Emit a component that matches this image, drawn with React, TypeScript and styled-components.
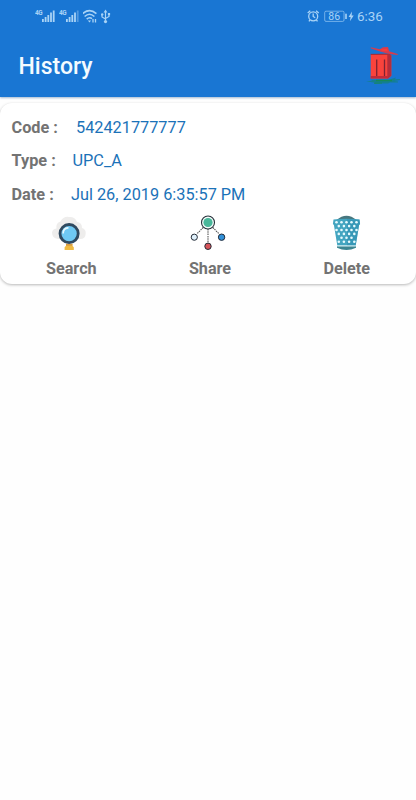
import React from "react";
import styled, { createGlobalStyle } from "styled-components";

const GlobalStyle = createGlobalStyle`
  * { box-sizing: border-box; }
  body { margin: 0; background: #fefefe; font-family: Roboto, "Liberation Sans", sans-serif; }
`;

const Screen = styled.main`
  width: 100%;
  min-height: 800px;
  background: #fefefe;
  overflow: hidden;
`;

const Header = styled.header`
  height: 97px;
  background: #1976d3;
  box-shadow: 0 1px 2px rgba(20, 80, 140, 0.4);
`;

const StatusBar = styled.div`
  height: 32px;
  padding: 0 34px 0 35px;
  display: flex;
  align-items: center;
  justify-content: space-between;
  color: #a9d3f6;
`;

const StatusGroup = styled.div`
  display: flex;
  align-items: center;
  height: 20px;
`;

const Clock = styled.span`
  font-size: 13.4px;
  line-height: 20px;
  margin-left: 3px;
  padding-top: 1px;
  width: 25px;
  white-space: nowrap;
`;

const Toolbar = styled.div`
  height: 65px;
  padding: 0 14px 0 18.5px;
  display: flex;
  align-items: center;
  justify-content: space-between;
`;

const Title = styled.h1`
  margin: 0;
  padding-top: 5px;
  color: #f4fbff;
  font-size: 23px;
  font-weight: 500;
  line-height: 30px;
`;

const IconButton = styled.button`
  display: block;
  padding: 0;
  border: 0;
  background: none;
  height: 40px;
`;

const Card = styled.section`
  margin-top: 6px;
  height: 181px;
  padding-top: 7.5px;
  background: #fff;
  border-radius: 12px;
  box-shadow: 0 1px 3px rgba(0, 0, 0, 0.28);
`;

const Field = styled.div`
  height: 33.5px;
  padding-left: 11.5px;
  display: flex;
  align-items: center;
  font-size: 16.3px;
  white-space: nowrap;
`;

const Label = styled.span<{ $width: number }>`
  width: ${(p) => p.$width}px;
  color: #737373;
  font-weight: 700;
`;

const Value = styled.span`
  color: #1b72b8;
`;

const Actions = styled.div`
  margin-top: 4px;
  display: grid;
  grid-template-columns: repeat(3, 1fr);
`;

const Action = styled.div`
  display: flex;
  flex-direction: column;
  align-items: center;
`;

const ActionLabel = styled.span<{ $shift: number }>`
  margin-top: 8px;
  padding-left: ${(p) => p.$shift}px;
  color: #737373;
  font-size: 16.2px;
  font-weight: 700;
  line-height: 20px;
`;

const Signal = ({ faded }: { faded?: boolean }) => (
  <svg width="24" height="20" viewBox="0 0 24 20" fill="currentColor">
    <text x="0" y="9" fontSize="6.4" fontWeight="700" textLength="7.5">4G</text>
    <rect x="7" y="13" width="1.8" height="3" />
    <rect x="9.7" y="11" width="1.8" height="5" />
    <rect x="12.4" y="9" width="1.8" height="7" />
    <rect x="15.1" y="6.5" width="1.8" height="9.5" />
    <rect x="17.8" y="4.5" width="1.8" height="11.5" opacity={faded ? 0.4 : 1} />
  </svg>
);

const WifiIcon = () => (
  <svg width="18" height="20" viewBox="0 0 18 20" fill="none" stroke="currentColor" strokeWidth="1.6">
    <path d="M-.4 7.7Q6.5 1.7 13.4 7.7M1.6 10.5Q6.5 6 11.4 10.5M3.7 13.1Q6.5 10.6 9 12.7" />
    <path d="M4.8 14.6h3.3l-1.6 1.9z" fill="currentColor" stroke="none" />
    <path d="M10 13v3.6M12.5 13v3.6" strokeWidth="1.3" />
  </svg>
);

const UsbIcon = () => (
  <svg width="10" height="20" viewBox="0 0 10 20" fill="none" stroke="currentColor" strokeWidth="1.2">
    <path d="M4.5 5.5v9M1 8.5v2.5l3.5 2M8 8v2.5L4.5 12.5" />
    <path d="M4.5 3.4 6.4 6.4H2.6z" fill="currentColor" stroke="none" />
    <g fill="currentColor" stroke="none">
      <circle cx="4.5" cy="15.6" r="1.6" />
      <circle cx="1.2" cy="8.4" r="1.2" />
      <rect x="6.9" y="7" width="2.2" height="2.2" />
    </g>
  </svg>
);

const AlarmIcon = () => (
  <svg width="15" height="20" viewBox="0 0 15 20" fill="none" stroke="currentColor" strokeWidth="1.3">
    <circle cx="6.2" cy="10.3" r="4.5" />
    <path d="M6.2 7.5v3l2 1.3M.7 7 3.3 4.7M11.7 7 9.1 4.7M3 14l-1.1 1.4M9.4 14l1.1 1.4" />
  </svg>
);

const BatteryIcon = () => (
  <svg width="32" height="20" viewBox="0 0 32 20" fill="currentColor">
    <rect x="2.7" y="5.2" width="19.3" height="10.2" rx="1.3" fill="none" stroke="currentColor" strokeWidth="0.8" opacity=".8" />
    <text x="6.3" y="14.2" fontSize="10.5">86</text>
    <rect x="23.2" y="7.7" width="1.6" height="5.3" />
    <path d="M30 5.4 26.6 10.9h2L27.9 15.3l3.8-5.9h-2.1z" />
  </svg>
);

const RedBin = () => (
  <svg width="36" height="40" viewBox="0 0 36 40">
    <path d="M0 36.2l6-.5-1-1h18l7-2.2-1 1.7 5-.3v1l-6 1 4 .6v1l-8 .1-2 .9H14l-6 .4 1-1.1z" fill="#147f91" />
    <path d="M10 34.8h16v1.5H10zM8 37.7h8v.9H8z" fill="#168958" />
    <path d="M4.7 9.3 22 8.7l3.3 1.5v20.6L22 33.5H4.7z" fill="#f9433c" />
    <path d="M21.3 9.5l4 .8v20.5L22 33.5h-.7z" fill="#b52d3b" />
    <path d="M4.7 31h17v2.5h-17z" fill="#c22b39" />
    <path d="M4.7 9.4 24.5 9.2" fill="none" stroke="#9c2b38" strokeWidth="1" />
    <path d="M10.7 14.5V31M18.5 14.5V31" fill="none" stroke="#7c2433" strokeWidth="1.3" />
    <path d="M4.7 2.2 14 4.2l3-1.9 5-.3 1.2 4.2 8.5 2.9v1l-8-1.1-9-2.2-10-3.6z" fill="#d83c4c" />
    <path d="m13.5 4.4 7.5-.7.8 2.6-5-.3z" fill="#fa3c38" />
  </svg>
);

const SearchIcon = () => (
  <svg width="36" height="36" viewBox="0 0 36 36">
    <path d="M7 24Q1 23 1 17.5 1.5 14 5.5 13.5 4.5 8 9.5 6.5 12.5 1 18 2 24 1.5 26 7q5 .5 5 6 4 1.3 3.7 5.5Q34.5 24 29 24z" fill="#eeedec" />
    <path d="M15 29h6.4v1.8l1.4 1.5V35h-9.2v-2.7l1.4-1.5z" fill="#f0bb43" />
    <path d="M15 28.7h6.4v2H15z" fill="#d69b42" />
    <circle cx="18.1" cy="18.6" r="9.1" fill="#6fc9f3" stroke="#304a60" strokeWidth="2.8" />
    <path d="M12.2 17.8Q12.4 13.4 16.8 12.8" fill="none" stroke="#e6f8ff" strokeWidth="1.7" strokeLinecap="round" />
  </svg>
);

const ShareIcon = () => (
  <svg width="36" height="36" viewBox="0 0 36 36">
    <path d="M13.2 12.5 7 18.8M22.8 12.5l6.2 6.3M18 14v14" stroke="#555" strokeWidth="1.1" strokeDasharray="1.5 .8" />
    <circle cx="18" cy="7.5" r="6.5" fill="#f3fbfa" stroke="#26313a" strokeWidth="1.1" />
    <circle cx="18" cy="7.5" r="4.6" fill="#49b79a" />
    <g stroke="#252c38" strokeWidth="1">
      <circle cx="4.3" cy="22.2" r="3.1" fill="#dff0fa" />
      <circle cx="31.6" cy="22.2" r="3.2" fill="#3190d8" />
      <circle cx="18" cy="31.3" r="3.2" fill="#d65359" />
    </g>
  </svg>
);

const dotRows = [7.2, 11.1, 15, 18.9, 22.8, 26.7];

const BasketIcon = () => (
  <svg width="36" height="36" viewBox="0 0 36 36">
    <path d="M7.5 5Q17.5-3.5 27.5 5z" fill="#48777f" />
    <path d="M4.5 4.5Q17.5 3 30.5 4.5l.6 4.5-1 1L26.7 30.5H8.3L4.9 10l-1-1z" fill="#43a5c0" />
    <path d="M18 4.2 30.5 4.5l.6 4.5-1 1L26.7 30.5H18z" fill="#3090b0" opacity=".6" />
    <g fill="#e6fafd">
      {dotRows.map((y, row) =>
        (row % 2 ? [9.8, 14.9, 20.1, 25.3] : [7.5, 12.5, 17.5, 22.5, 27.5])
          .filter((x) => Math.abs(x - 17.5) < 12.5 - row * 0.9)
          .map((x) => <circle key={`${x}-${y}`} cx={x} cy={y} r="1.3" />)
      )}
    </g>
    <path d="M8 31.3h19v1.4Q17.5 37.5 8 32.7z" fill="#3c8591" />
    <path d="M8.3 30.9h18.4" stroke="#c4e9ee" strokeWidth=".9" />
  </svg>
);

const fields = [
  { label: "Code :", value: "542421777777", width: 64.5 },
  { label: "Type :", value: "UPC_A", width: 61 },
  { label: "Date :", value: "Jul 26, 2019 6:35:57 PM", width: 59.5 },
];

const actions = [
  { label: "Search", icon: <SearchIcon />, shift: 4 },
  { label: "Share", icon: <ShareIcon />, shift: 4 },
  { label: "Delete", icon: <BasketIcon />, shift: 0 },
];

export default function App() {
  return (
    <>
      <GlobalStyle />
      <Screen>
        <Header>
          <StatusBar>
            <StatusGroup>
              <Signal />
              <Signal faded />
              <WifiIcon />
              <UsbIcon />
            </StatusGroup>
            <StatusGroup>
              <AlarmIcon />
              <BatteryIcon />
              <Clock>6:36</Clock>
            </StatusGroup>
          </StatusBar>
          <Toolbar>
            <Title>History</Title>
            <IconButton aria-label="Delete all"><RedBin /></IconButton>
          </Toolbar>
        </Header>
        <Card>
          {fields.map((f) => (
            <Field key={f.label}>
              <Label $width={f.width}>{f.label}</Label>
              <Value>{f.value}</Value>
            </Field>
          ))}
          <Actions>
            {actions.map((a) => (
              <Action key={a.label}>
                {a.icon}
                <ActionLabel $shift={a.shift}>{a.label}</ActionLabel>
              </Action>
            ))}
          </Actions>
        </Card>
      </Screen>
    </>
  );
}
